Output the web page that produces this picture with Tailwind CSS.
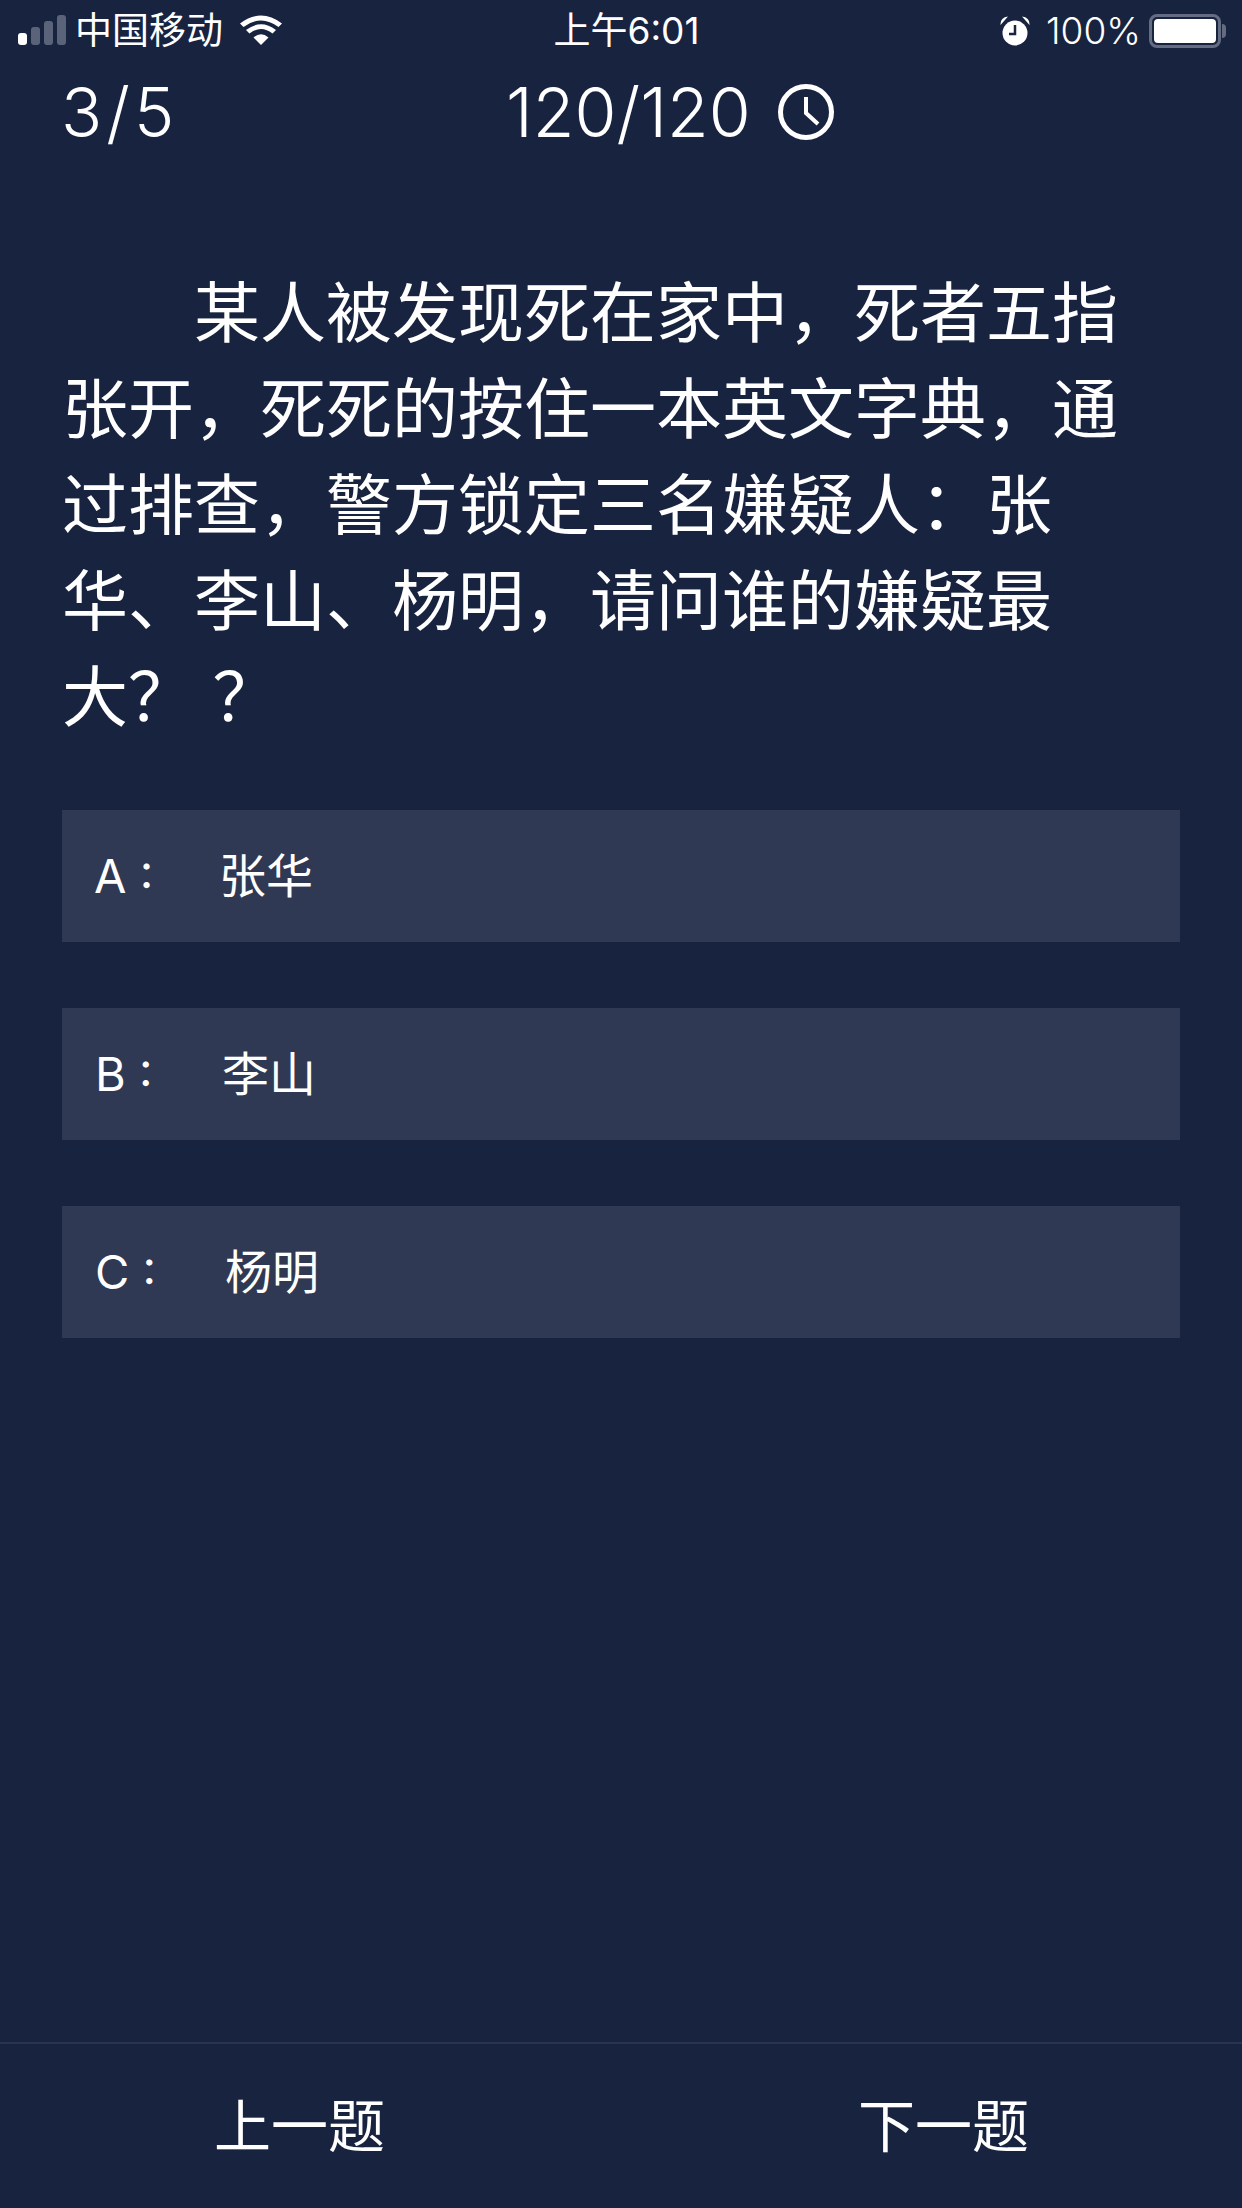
<!DOCTYPE html>
<html lang="zh-CN">
<head>
<meta charset="utf-8">
<script src="https://cdn.jsdelivr.net/npm/@tailwindcss/browser@4"></script>
</head>
<body class="m-0">
<div class="flex h-[2208px] w-[1242px] flex-col overflow-hidden bg-[#182340] text-white font-['Inter','Noto_Sans_CJK_SC',sans-serif]">
  <div class="grid h-[62px] shrink-0 grid-cols-3 items-center pl-[18px] pr-[16px] text-[37px] font-light">
    <div class="flex items-center">
      <svg width="50" height="32" viewBox="0 0 50 32" class="mr-[7px]">
        <rect x="0" y="18" width="9" height="12" rx="3" fill="#fff"/>
        <rect x="13" y="12" width="9" height="18" rx="3" fill="#5a6379"/>
        <rect x="26" y="6" width="9" height="24" rx="3" fill="#5a6379"/>
        <rect x="39" y="0" width="9" height="30" rx="3" fill="#5a6379"/>
      </svg>
      <span class="font-normal">中国移动</span>
      <svg width="42" height="30" viewBox="0 0 42 30" class="ml-[17px] -mt-[2px]">
        <path d="M21 30 L13.5 22.5 Q21 16 28.5 22.5 Z" fill="#fff"/>
        <path d="M9.5 18.5 L6 15 Q21 3.5 36 15 L32.5 18.5 Q21 9.5 9.5 18.5 Z" fill="#fff"/>
        <path d="M3.500 12 L0 8.500 Q21 -7.500 42 8.500 L38.500 12 Q21 -1 3.500 12 Z" fill="#fff"/>
      </svg>
    </div>
    <div class="pl-[9px] text-center font-normal">上午6:01</div>
    <div class="flex items-center justify-end">
      <svg width="32" height="32" viewBox="0 0 32 32" class="mr-[15px]">
        <circle cx="16" cy="18" r="12.500" fill="#fff"/>
        <path d="M1.500 10 Q1 2.500 9 1.500 Z M30.500 10 Q31 2.500 23 1.500 Z" fill="#fff"/>
        <path d="M16 10 V19 H10" fill="none" stroke="#182340" stroke-width="2.500"/>
      </svg>
      <span>100%</span>
      <div class="ml-[8px] flex h-[34px] w-[72px] items-center justify-center rounded-[8px] border-[3px] border-[#646c82]">
        <div class="h-[24px] w-[62px] rounded-[4px] bg-white"></div>
      </div>
      <div class="ml-[1px] h-[14px] w-[4px] rounded-r-full bg-[#646c82]"></div>
    </div>
  </div>

  <div class="flex h-[100px] shrink-0 items-center pl-[61px] text-[68px] font-light leading-none">
    <span class="w-[445px] tracking-[4px]">3/5</span>
    <span>120/120</span>
    <svg width="58" height="58" viewBox="0 0 58 58" class="ml-[26px]">
      <circle cx="29" cy="29" r="25.500" fill="none" stroke="#fff" stroke-width="5"/>
      <path d="M29 14 V30 L41 41" fill="none" stroke="#fff" stroke-width="4"/>
    </svg>
  </div>

  <p class="mx-[62px] mt-[103px] shrink-0 indent-[132px] text-[66px] font-normal leading-[96px]">某人被发现死在家中，死者五指张开，死死的按住一本英文字典，通过排查，警方锁定三名嫌疑人：张华、李山、杨明，请问谁的嫌疑最大？ ？</p>

  <div class="mx-[62px] mt-[65px] flex shrink-0 flex-col gap-[66px] text-[47px] font-normal">
    <div class="flex h-[132px] items-center bg-[#2f3953] pl-[32px]"><span class="w-[125px]">A :</span><span>张华</span></div>
    <div class="flex h-[132px] items-center bg-[#2f3953] pl-[33px]"><span class="w-[127px]">B :</span><span>李山</span></div>
    <div class="flex h-[132px] items-center bg-[#2f3953] pl-[33px]"><span class="w-[130px]">C :</span><span>杨明</span></div>
  </div>

  <div class="mt-auto flex h-[166px] shrink-0 items-center border-t-2 border-[#2a3450] text-[57px] font-normal">
    <span class="ml-[214px] translate-y-[1px]">上一题</span>
    <span class="ml-[473px] translate-y-[1px]">下一题</span>
  </div>
</div>
</body>
</html>
